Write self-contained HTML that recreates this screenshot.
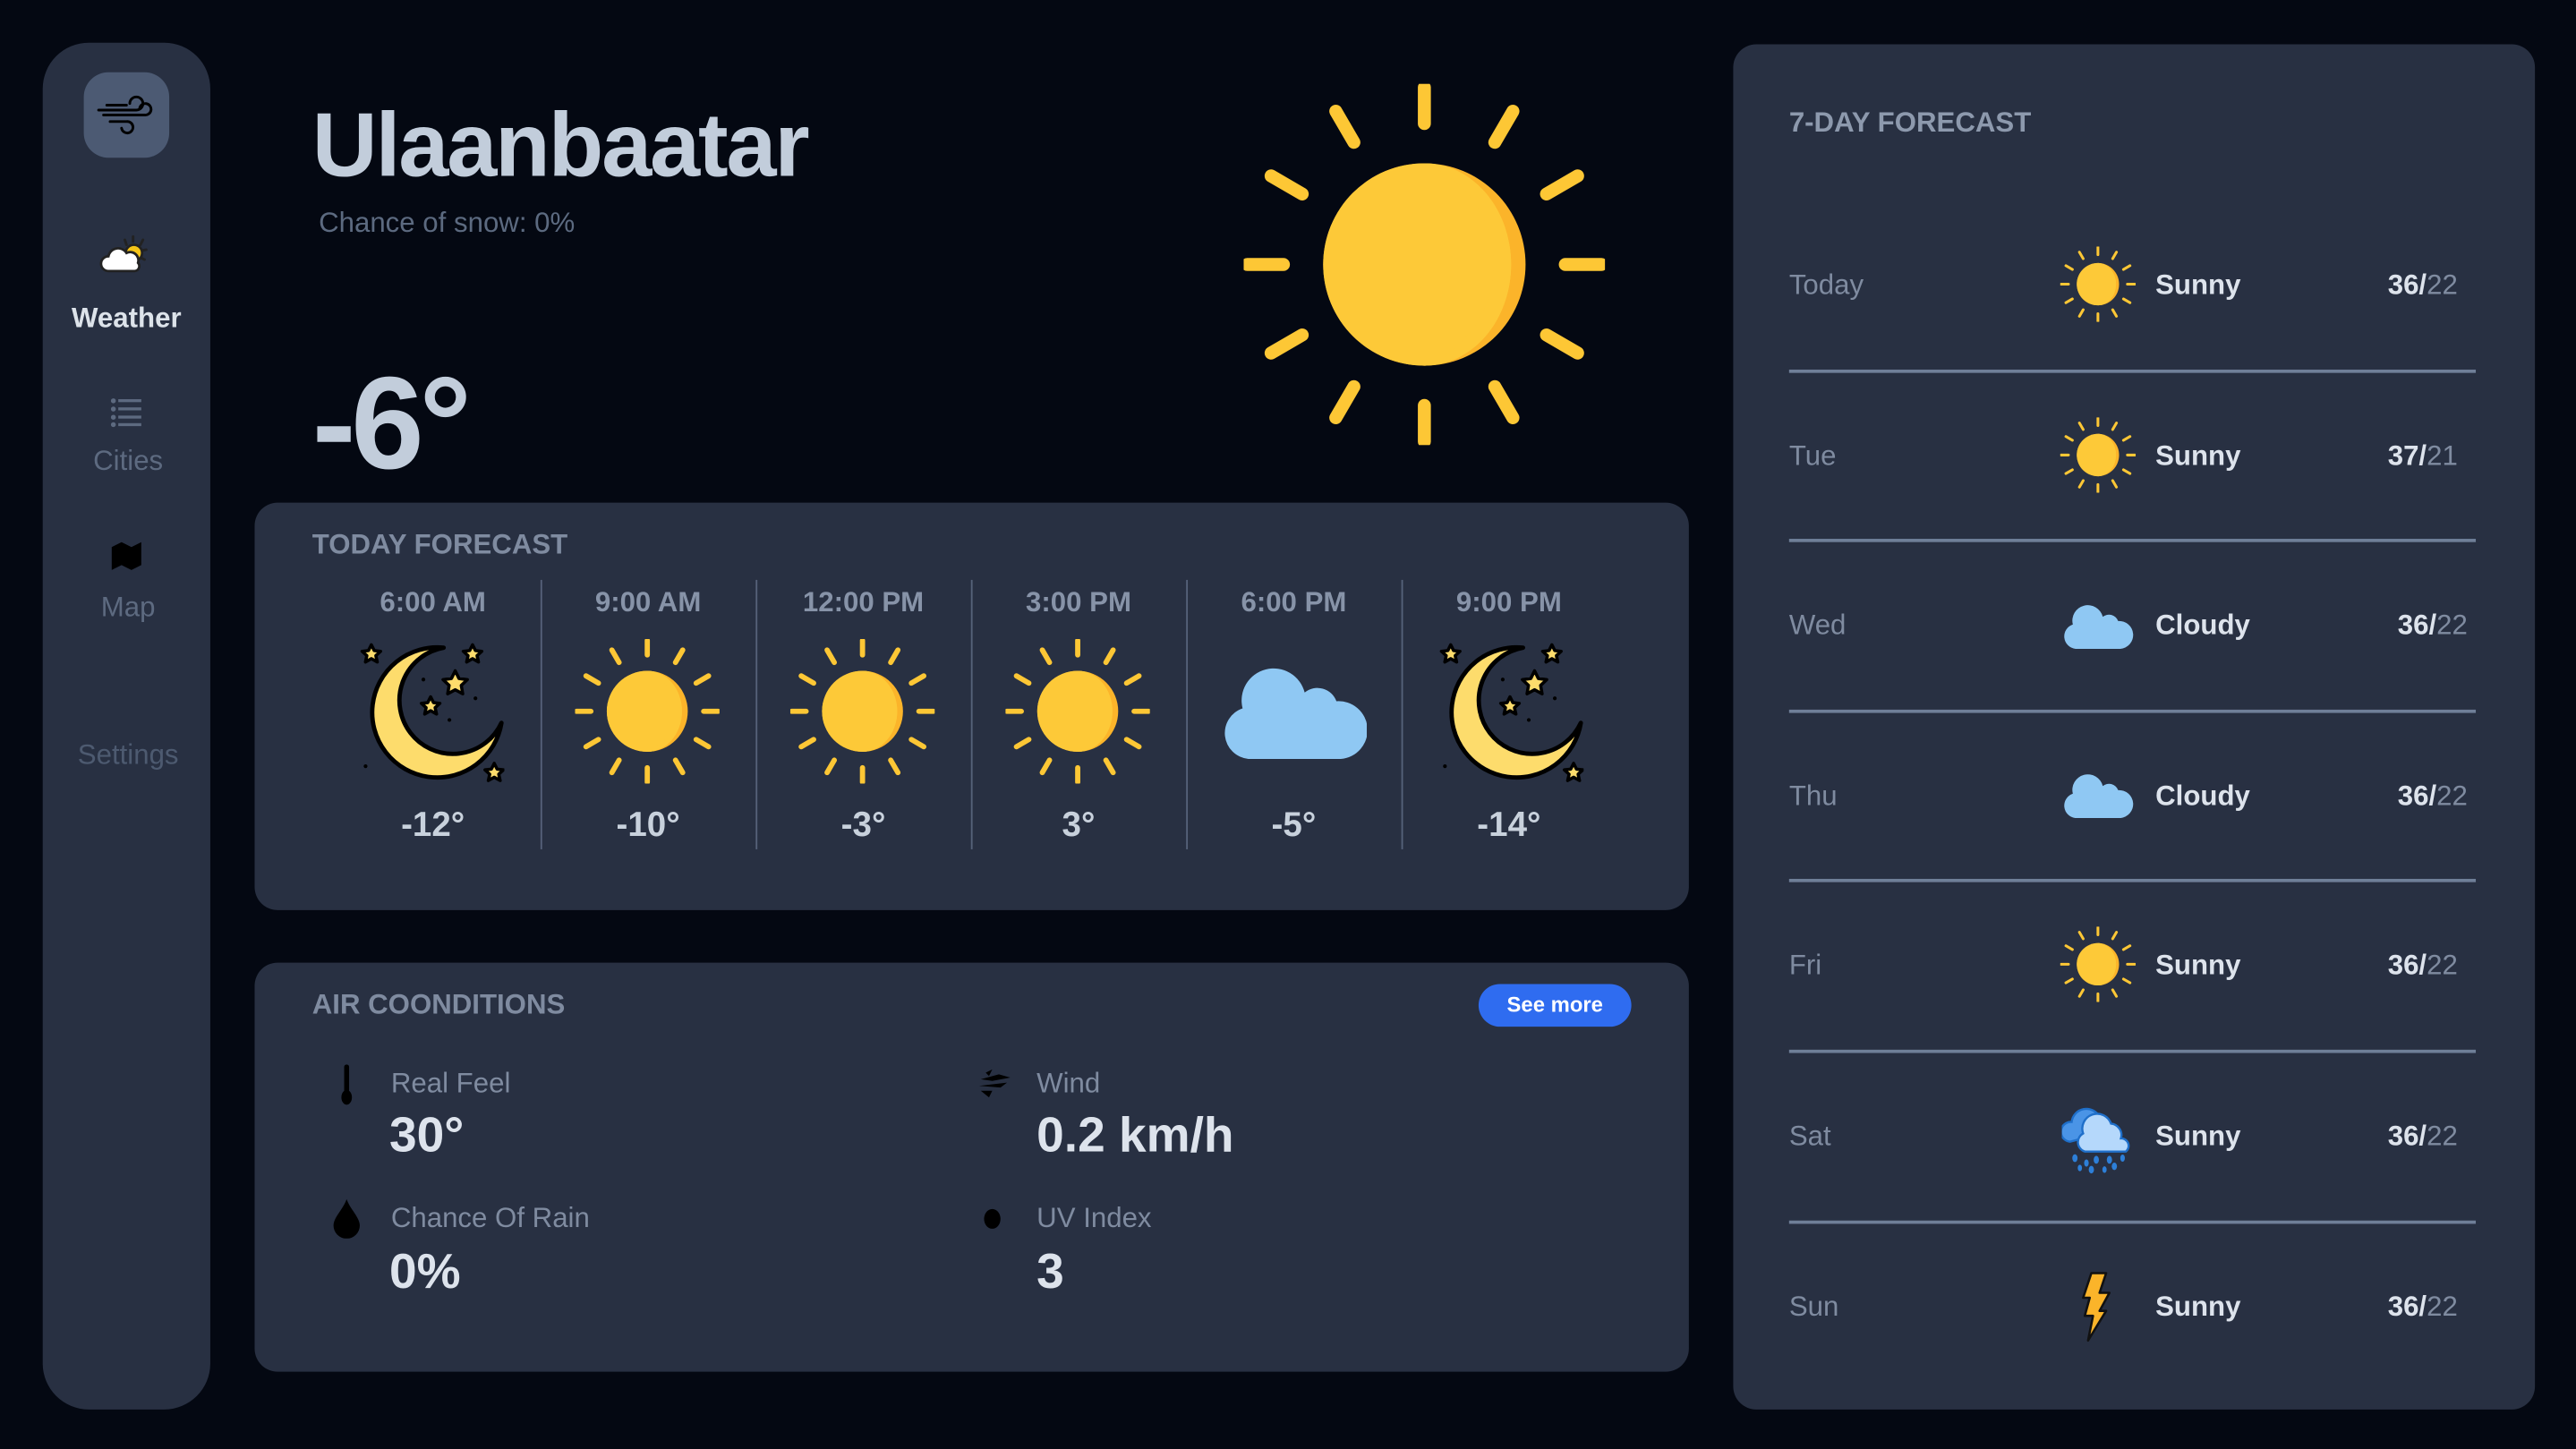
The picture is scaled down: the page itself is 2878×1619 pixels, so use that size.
<!DOCTYPE html>
<html><head><meta charset="utf-8"><style>
html,body{margin:0;padding:0;background:#040812;width:2878px;height:1618px;overflow:hidden}
#w{position:absolute;left:0;top:0;width:1568px;height:882px;transform:scale(1.83546);transform-origin:0 0;font-family:"Liberation Sans",sans-serif}
.a{position:absolute;white-space:nowrap}
.p{position:absolute;background:#283042}
.t{font-weight:bold;font-size:17px;color:#7f8ba0}
.time{font-weight:bold;font-size:17px;color:#8793a8;width:131px;text-align:center;top:357px}
.tmp{font-weight:bold;font-size:21px;color:#c8d1dc;width:131px;text-align:center;top:491px}
.vd{position:absolute;top:353px;width:1px;height:164px;background:#56627a}
.ic{position:absolute}
.day{font-size:17px;color:#7f8ba0;left:1089px}
.cond{font-size:17px;font-weight:bold;color:#dde3ec;left:1312px}
.hi{font-size:17px;font-weight:bold;color:#dde3ec;text-align:right;width:120px}
.hi span{font-weight:normal;color:#7f8ba0}
.hr{position:absolute;left:1089px;width:418px;height:1.5px;background:#6f7f98}
.lab{font-size:17px;color:#7f8ba0}
.val{font-size:30px;font-weight:bold;color:#dde3ec}
</style></head><body>
<svg width="0" height="0" style="position:absolute">
<defs>
<symbol id="sun" viewBox="0 0 100 100">
<g stroke="#fdc735" stroke-width="3.6" stroke-linecap="round">
<line x1="50" y1="11" x2="50" y2="1"/><line x1="50" y1="89" x2="50" y2="99"/>
<line x1="11" y1="50" x2="1" y2="50"/><line x1="89" y1="50" x2="99" y2="50"/>
<line x1="30.5" y1="16.2" x2="25.5" y2="7.6"/><line x1="69.5" y1="16.2" x2="74.5" y2="7.6"/>
<line x1="30.5" y1="83.8" x2="25.5" y2="92.4"/><line x1="69.5" y1="83.8" x2="74.5" y2="92.4"/>
<line x1="16.2" y1="30.5" x2="7.6" y2="25.5"/><line x1="83.8" y1="30.5" x2="92.4" y2="25.5"/>
<line x1="16.2" y1="69.5" x2="7.6" y2="74.5"/><line x1="83.8" y1="69.5" x2="92.4" y2="74.5"/>
</g>
<circle cx="50" cy="50" r="28" fill="#fbb42a"/>
<path d="M50 22 A28 28 0 0 0 50 78 A24 28 0 0 0 50 22Z" fill="#fdc938"/>
<path d="M50 22 A24 28 0 0 1 50 78 A30 30 0 0 0 50 22Z" fill="#fdc938"/>
</symbol>
<symbol id="moon" viewBox="0 0 100 100">
<path d="M58 6 A45 45 0 1 0 98 58 A37 37 0 1 1 58 6Z" fill="#fddc6c" stroke="#000" stroke-width="3" stroke-linejoin="round"/>
<g fill="#fddc6c" stroke="#000" stroke-width="2.2" stroke-linejoin="round">
<path d="M8 4 l2 4 4.4 .5 -3.3 3 1 4.4 -4.1-2.3 -4.1 2.3 1-4.4 -3.3-3 4.4-.5z"/>
<path d="M78 4 l2 4 4.4 .5 -3.3 3 1 4.4 -4.1-2.3 -4.1 2.3 1-4.4 -3.3-3 4.4-.5z"/>
<path d="M66 22 l2.6 5.3 5.8.8 -4.2 4 1 5.8 -5.2-2.8 -5.2 2.8 1-5.8 -4.2-4 5.8-.8z"/>
<path d="M49 40 l2 4 4.4 .5 -3.3 3 1 4.4 -4.1-2.3 -4.1 2.3 1-4.4 -3.3-3 4.4-.5z"/>
<path d="M93 86 l2 4 4.4 .5 -3.3 3 1 4.4 -4.1-2.3 -4.1 2.3 1-4.4 -3.3-3 4.4-.5z"/>
</g>
<g fill="#000"><circle cx="44" cy="28" r="1.3"/><circle cx="80" cy="41" r="1.3"/><circle cx="62" cy="56" r="1.3"/><circle cx="4" cy="88" r="1.3"/></g>
</symbol>
<symbol id="cloud" viewBox="0 0 100 66">
<path d="M18 66 A18 18 0 0 1 14 31 A22 22 0 0 1 57 20 A14 14 0 0 1 79 26 A20 20 0 0 1 82 66Z" fill="#8fc8f3"/>
</symbol>
</defs>
</svg>
<div id="w">
<div class="p" style="left:26px;top:26px;width:102px;height:832px;border-radius:28px"></div>
<div class="a" style="left:51px;top:44px;width:52px;height:52px;border-radius:15px;background:#4c5a73"></div>
<svg class="ic" style="left:57px;top:50px" width="40" height="40" viewBox="0 0 40 40" fill="none" stroke="#000" stroke-width="1.6" stroke-linecap="round">
<path d="M3 17 H26 A4 4 0 1 0 22 13"/><path d="M8 14 H20"/><path d="M6 20 H31 A3.5 3.5 0 1 0 28 16"/><path d="M10 24 H20 A3.5 3.5 0 1 1 17 28"/></svg>
<svg class="ic" style="left:60px;top:141px" width="32" height="28" viewBox="0 0 32 28">
<g stroke="#222" stroke-width="1.6" stroke-linecap="round"><line x1="21" y1="3" x2="21" y2="6"/><line x1="27" y1="5" x2="25.5" y2="8"/><line x1="29" y1="11" x2="26.5" y2="11.5"/><line x1="28" y1="17" x2="26" y2="16"/><line x1="16" y1="5" x2="17" y2="8"/></g>
<circle cx="21.5" cy="13" r="5" fill="#f5c518" stroke="#222" stroke-width="1.5"/>
<path d="M6 24 A4.5 4.5 0 0 1 6 15 A6 6 0 0 1 17 13 A5 5 0 0 1 24 19 A3 3 0 0 1 22 24Z" fill="#fff" stroke="#222" stroke-width="1.5"/></svg>
<div class="a" style="left:26px;width:102px;text-align:center;top:184px;font-size:17px;font-weight:bold;color:#dde3ea">Weather</div>
<svg class="ic" style="left:67px;top:242px" width="20" height="18" viewBox="0 0 20 18" fill="#5d6a80"><circle cx="2" cy="2" r="1.5"/><circle cx="2" cy="7" r="1.5"/><circle cx="2" cy="12" r="1.5"/><circle cx="2" cy="16.5" r="1.5"/><rect x="5" y="1" width="14" height="1.8"/><rect x="5" y="6" width="14" height="1.8"/><rect x="5" y="11" width="14" height="1.8"/><rect x="5" y="15.6" width="14" height="1.8"/></svg>
<div class="a" style="left:27px;width:102px;text-align:center;top:271px;font-size:17px;color:#5d6a80">Cities</div>
<svg class="ic" style="left:67px;top:329px" width="20" height="20" viewBox="0 0 20 20"><path d="M1 4 L7 1 L13 4 L19 1 V15 L13 18 L7 15 L1 18Z" fill="#000"/></svg>
<div class="a" style="left:27px;width:102px;text-align:center;top:360px;font-size:17px;color:#5d6a80">Map</div>
<div class="a" style="left:27px;width:102px;text-align:center;top:450px;font-size:17px;color:#4d5a70">Settings</div>

<div class="a" style="left:190px;top:56px;font-size:55px;font-weight:bold;color:#c2cddb;letter-spacing:-1.2px">Ulaanbaatar</div>
<div class="a" style="left:194px;top:126px;font-size:17px;color:#5c6a80">Chance of snow: 0%</div>
<div class="a" style="left:190px;top:212px;font-size:80px;font-weight:bold;color:#c2cddb;letter-spacing:-3px">-6°</div>
<svg class="ic" style="left:757px;top:51px" width="220" height="220"><use href="#sun"/></svg>

<div class="p" style="left:155px;top:306px;width:873px;height:248px;border-radius:14px"></div>
<div class="a t" style="left:190px;top:322px">TODAY FORECAST</div>
<div class="vd" style="left:329px"></div><div class="vd" style="left:460px"></div><div class="vd" style="left:591px"></div><div class="vd" style="left:722px"></div><div class="vd" style="left:853px"></div>
<div class="a time" style="left:198px">6:00 AM</div>
<div class="a time" style="left:329px">9:00 AM</div>
<div class="a time" style="left:460px">12:00 PM</div>
<div class="a time" style="left:591px">3:00 PM</div>
<div class="a time" style="left:722px">6:00 PM</div>
<div class="a time" style="left:853px">9:00 PM</div>
<svg class="ic" style="left:219px;top:389px" width="88" height="88"><use href="#moon"/></svg>
<svg class="ic" style="left:350px;top:389px" width="88" height="88"><use href="#sun"/></svg>
<svg class="ic" style="left:481px;top:389px" width="88" height="88"><use href="#sun"/></svg>
<svg class="ic" style="left:612px;top:389px" width="88" height="88"><use href="#sun"/></svg>
<svg class="ic" style="left:744px;top:404px" width="88" height="58"><use href="#cloud"/></svg>
<svg class="ic" style="left:876px;top:389px" width="88" height="88"><use href="#moon"/></svg>
<div class="a tmp" style="left:198px">-12°</div>
<div class="a tmp" style="left:329px">-10°</div>
<div class="a tmp" style="left:460px">-3°</div>
<div class="a tmp" style="left:591px">3°</div>
<div class="a tmp" style="left:722px">-5°</div>
<div class="a tmp" style="left:853px">-14°</div>

<div class="p" style="left:155px;top:586px;width:873px;height:249px;border-radius:14px"></div>
<div class="a t" style="left:190px;top:602px">AIR COONDITIONS</div>
<div class="a" style="left:900px;top:599px;width:93px;height:26px;border-radius:13px;background:#2f6cf0;color:#fff;font-size:13px;font-weight:bold;text-align:center;line-height:26px">See more</div>
<svg class="ic" style="left:205px;top:648px" width="12" height="25" viewBox="0 0 12 25"><rect x="4.5" y="0" width="3" height="19" rx="1.5" fill="#000"/><ellipse cx="6" cy="20" rx="3.2" ry="4.5" fill="#000"/></svg>
<div class="a lab" style="left:238px;top:650px">Real Feel</div>
<div class="a val" style="left:237px;top:675px">30°</div>
<svg class="ic" style="left:594px;top:651px" width="22" height="18" viewBox="0 0 22 18" fill="#000"><path d="M6 2 L10 0 L8 4Z M3 6 L14 3 L21 5 L10 7Z M2 10 L19 8 L15 11Z M3 13 L10 13 L8 17Z"/></svg>
<div class="a lab" style="left:631px;top:650px">Wind</div>
<div class="a val" style="left:631px;top:675px">0.2 km/h</div>
<svg class="ic" style="left:202px;top:730px" width="18" height="24" viewBox="0 0 18 24"><path d="M9 0 C11 6 17 11 17 16 A8 8 0 0 1 1 16 C1 11 7 6 9 0Z" fill="#000"/></svg>
<div class="a lab" style="left:238px;top:732px">Chance Of Rain</div>
<div class="a val" style="left:237px;top:758px">0%</div>
<svg class="ic" style="left:598px;top:735px" width="12" height="14"><ellipse cx="6" cy="7" rx="5" ry="6" fill="#000"/></svg>
<div class="a lab" style="left:631px;top:732px">UV Index</div>
<div class="a val" style="left:631px;top:758px">3</div>

<div class="p" style="left:1055px;top:27px;width:488px;height:831px;border-radius:14px"></div>
<div class="a t" style="left:1089px;top:65px;color:#8d99ad">7-DAY FORECAST</div>

<div class="a day" style="top:164px">Today</div>
<svg class="ic" style="left:1254px;top:150px" width="46" height="46"><use href="#sun"/></svg>
<div class="a cond" style="top:164px">Sunny</div>
<div class="a hi" style="left:1376px;top:164px">36/<span>22</span></div>
<div class="hr" style="top:225px"></div>

<div class="a day" style="top:268px">Tue</div>
<svg class="ic" style="left:1254px;top:254px" width="46" height="46"><use href="#sun"/></svg>
<div class="a cond" style="top:268px">Sunny</div>
<div class="a hi" style="left:1376px;top:268px">37/<span>21</span></div>
<div class="hr" style="top:328px"></div>

<div class="a day" style="top:371px">Wed</div>
<svg class="ic" style="left:1255px;top:367px" width="44" height="28"><use href="#cloud"/></svg>
<div class="a cond" style="top:371px">Cloudy</div>
<div class="a hi" style="left:1382px;top:371px">36/<span>22</span></div>
<div class="hr" style="top:432px"></div>

<div class="a day" style="top:475px">Thu</div>
<svg class="ic" style="left:1255px;top:470px" width="44" height="28"><use href="#cloud"/></svg>
<div class="a cond" style="top:475px">Cloudy</div>
<div class="a hi" style="left:1382px;top:475px">36/<span>22</span></div>
<div class="hr" style="top:535px"></div>

<div class="a day" style="top:578px">Fri</div>
<svg class="ic" style="left:1254px;top:564px" width="46" height="46"><use href="#sun"/></svg>
<div class="a cond" style="top:578px">Sunny</div>
<div class="a hi" style="left:1376px;top:578px">36/<span>22</span></div>
<div class="hr" style="top:639px"></div>

<div class="a day" style="top:682px">Sat</div>
<svg class="ic" style="left:1255px;top:669px" width="46" height="46" viewBox="0 0 46 46">
<path d="M5 26 A6 6 0 0 1 6 14 A9 9 0 0 1 23 11 A6 6 0 0 1 28 20 Z" fill="#4a94e6" stroke="#1f6fc9" stroke-width="1.3"/>
<path d="M14 32 A6 6 0 0 1 13 21 A9 9 0 0 1 30 15 A7 7 0 0 1 36 24 A4.5 4.5 0 0 1 39 32Z" fill="#b5d8fb" stroke="#1f6fc9" stroke-width="1.3"/>
<g fill="#2d7fd8"><ellipse cx="8" cy="36" rx="1.6" ry="2.4"/><ellipse cx="15" cy="39" rx="1.4" ry="2.2"/><ellipse cx="21" cy="37" rx="1.6" ry="2.4"/><ellipse cx="29" cy="37" rx="1.6" ry="2.4"/><ellipse cx="37" cy="36" rx="1.4" ry="2.2"/><ellipse cx="11" cy="42" rx="1.3" ry="2"/><ellipse cx="18" cy="43" rx="1.6" ry="2.3"/><ellipse cx="26" cy="43" rx="1.3" ry="2"/><ellipse cx="32" cy="41" rx="1.6" ry="2.3"/></g></svg>
<div class="a cond" style="top:682px">Sunny</div>
<div class="a hi" style="left:1376px;top:682px">36/<span>22</span></div>
<div class="hr" style="top:743px"></div>

<div class="a day" style="top:786px">Sun</div>
<svg class="ic" style="left:1265px;top:773px" width="24" height="44" viewBox="0 0 24 44"><path d="M8 2 H17 L13 14 L19 14 L13 25 L17 25 L6 43 L9 28 L4 28 L7 17 L3 17Z" fill="#fbb42a" stroke="#111" stroke-width="1.4" stroke-linejoin="round"/></svg>
<div class="a cond" style="top:786px">Sunny</div>
<div class="a hi" style="left:1376px;top:786px">36/<span>22</span></div>
</div>
</body></html>
